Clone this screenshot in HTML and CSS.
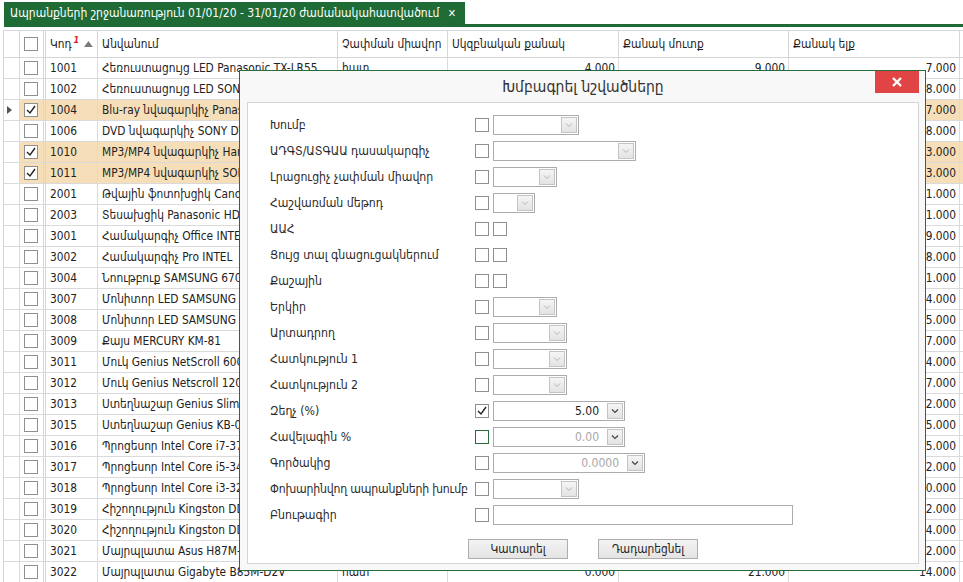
FILE: index.html
```html
<!DOCTYPE html>
<html lang="hy">
<head>
<meta charset="utf-8">
<title>Ապրանքների շրջանառություն</title>
<link rel="stylesheet" href="styles.css">
</head>
<body>
<div class="tabs">
  <div class="strip">
    <div class="tab"><span class="tab-text">Ապրանքների շրջանառություն 01/01/20 - 31/01/20 ժամանակահատվածում</span><span class="tab-x">✕</span></div>
  </div>
</div>

<div class="grid">
  <div class="row head">
    <div class="c ind"></div>
    <div class="c chk"><span class="cb"></span></div>
    <div class="c code">Կոդ<sup class="sortno">1</sup><svg class="sort" width="9" height="6" viewBox="0 0 9 6"><polygon points="0,6 9,6 4.5,0" fill="#7a7a7a"/></svg></div>
    <div class="c name">Անվանում</div>
    <div class="c unit">Չափման միավոր</div>
    <div class="c qs">Սկզբնական քանակ</div>
    <div class="c qi">Քանակ մուտք</div>
    <div class="c qo">Քանակ ելք</div>
    <div class="c fill"></div>
  </div>

  <div class="row"><div class="c ind"></div><div class="c chk"><span class="cb"></span></div><div class="c code">1001</div><div class="c name">Հեռուստացույց LED Panasonic TX-LR55</div><div class="c unit">հատ</div><div class="c num qs">4.000</div><div class="c num qi">9.000</div><div class="c num qo">7.000</div><div class="c fill"></div></div>
  <div class="row"><div class="c ind"></div><div class="c chk"><span class="cb"></span></div><div class="c code">1002</div><div class="c name">Հեռուստացույց LED SONY KDL-40</div><div class="c unit">հատ</div><div class="c num qs">2.000</div><div class="c num qi">10.000</div><div class="c num qo">8.000</div><div class="c fill"></div></div>
  <div class="row sel"><div class="c ind"><svg class="cur" width="5" height="8" viewBox="0 0 5 8"><polygon points="0,0 5,4 0,8" fill="#555"/></svg></div><div class="c chk"><span class="cb on"><svg width="12" height="12" viewBox="0 0 12 12"><polyline points="2,6 5,9 10,2" fill="none" stroke="#222" stroke-width="1.4"/></svg></span></div><div class="c code">1004</div><div class="c name">Blu-ray նվագարկիչ Panasonic DMP</div><div class="c unit">հատ</div><div class="c num qs">3.000</div><div class="c num qi">6.000</div><div class="c num qo">7.000</div><div class="c fill"></div></div>
  <div class="row"><div class="c ind"></div><div class="c chk"><span class="cb"></span></div><div class="c code">1006</div><div class="c name">DVD նվագարկիչ SONY DVP-SR</div><div class="c unit">հատ</div><div class="c num qs">1.000</div><div class="c num qi">8.000</div><div class="c num qo">8.000</div><div class="c fill"></div></div>
  <div class="row sel"><div class="c ind"></div><div class="c chk"><span class="cb on"><svg width="12" height="12" viewBox="0 0 12 12"><polyline points="2,6 5,9 10,2" fill="none" stroke="#222" stroke-width="1.4"/></svg></span></div><div class="c code">1010</div><div class="c name">MP3/MP4 նվագարկիչ Hama</div><div class="c unit">հատ</div><div class="c num qs">2.000</div><div class="c num qi">4.000</div><div class="c num qo">3.000</div><div class="c fill"></div></div>
  <div class="row sel"><div class="c ind"></div><div class="c chk"><span class="cb on"><svg width="12" height="12" viewBox="0 0 12 12"><polyline points="2,6 5,9 10,2" fill="none" stroke="#222" stroke-width="1.4"/></svg></span></div><div class="c code">1011</div><div class="c name">MP3/MP4 նվագարկիչ SONY</div><div class="c unit">հատ</div><div class="c num qs">0.000</div><div class="c num qi">5.000</div><div class="c num qo">3.000</div><div class="c fill"></div></div>
  <div class="row"><div class="c ind"></div><div class="c chk"><span class="cb"></span></div><div class="c code">2001</div><div class="c name">Թվային ֆոտոխցիկ Canon</div><div class="c unit">հատ</div><div class="c num qs">1.000</div><div class="c num qi">2.000</div><div class="c num qo">1.000</div><div class="c fill"></div></div>
  <div class="row"><div class="c ind"></div><div class="c chk"><span class="cb"></span></div><div class="c code">2003</div><div class="c name">Տեսախցիկ Panasonic HDC</div><div class="c unit">հատ</div><div class="c num qs">0.000</div><div class="c num qi">3.000</div><div class="c num qo">1.000</div><div class="c fill"></div></div>
  <div class="row"><div class="c ind"></div><div class="c chk"><span class="cb"></span></div><div class="c code">3001</div><div class="c name">Համակարգիչ Office INTEL</div><div class="c unit">հատ</div><div class="c num qs">5.000</div><div class="c num qi">12.000</div><div class="c num qo">9.000</div><div class="c fill"></div></div>
  <div class="row"><div class="c ind"></div><div class="c chk"><span class="cb"></span></div><div class="c code">3002</div><div class="c name">Համակարգիչ Pro INTEL</div><div class="c unit">հատ</div><div class="c num qs">3.000</div><div class="c num qi">10.000</div><div class="c num qo">8.000</div><div class="c fill"></div></div>
  <div class="row"><div class="c ind"></div><div class="c chk"><span class="cb"></span></div><div class="c code">3004</div><div class="c name">Նոութբուք SAMSUNG 670Z</div><div class="c unit">հատ</div><div class="c num qs">1.000</div><div class="c num qi">2.000</div><div class="c num qo">1.000</div><div class="c fill"></div></div>
  <div class="row"><div class="c ind"></div><div class="c chk"><span class="cb"></span></div><div class="c code">3007</div><div class="c name">Մոնիտոր LED SAMSUNG S22</div><div class="c unit">հատ</div><div class="c num qs">2.000</div><div class="c num qi">6.000</div><div class="c num qo">4.000</div><div class="c fill"></div></div>
  <div class="row"><div class="c ind"></div><div class="c chk"><span class="cb"></span></div><div class="c code">3008</div><div class="c name">Մոնիտոր LED SAMSUNG S24</div><div class="c unit">հատ</div><div class="c num qs">1.000</div><div class="c num qi">7.000</div><div class="c num qo">5.000</div><div class="c fill"></div></div>
  <div class="row"><div class="c ind"></div><div class="c chk"><span class="cb"></span></div><div class="c code">3009</div><div class="c name">Քայս MERCURY KM-81</div><div class="c unit">հատ</div><div class="c num qs">2.000</div><div class="c num qi">8.000</div><div class="c num qo">7.000</div><div class="c fill"></div></div>
  <div class="row"><div class="c ind"></div><div class="c chk"><span class="cb"></span></div><div class="c code">3011</div><div class="c name">Մուկ Genius NetScroll 600</div><div class="c unit">հատ</div><div class="c num qs">3.000</div><div class="c num qi">5.000</div><div class="c num qo">4.000</div><div class="c fill"></div></div>
  <div class="row"><div class="c ind"></div><div class="c chk"><span class="cb"></span></div><div class="c code">3012</div><div class="c name">Մուկ Genius Netscroll 120</div><div class="c unit">հատ</div><div class="c num qs">4.000</div><div class="c num qi">9.000</div><div class="c num qo">7.000</div><div class="c fill"></div></div>
  <div class="row"><div class="c ind"></div><div class="c chk"><span class="cb"></span></div><div class="c code">3013</div><div class="c name">Ստեղնաշար Genius SlimStar</div><div class="c unit">հատ</div><div class="c num qs">1.000</div><div class="c num qi">3.000</div><div class="c num qo">2.000</div><div class="c fill"></div></div>
  <div class="row"><div class="c ind"></div><div class="c chk"><span class="cb"></span></div><div class="c code">3015</div><div class="c name">Ստեղնաշար Genius KB-06</div><div class="c unit">հատ</div><div class="c num qs">2.000</div><div class="c num qi">6.000</div><div class="c num qo">5.000</div><div class="c fill"></div></div>
  <div class="row"><div class="c ind"></div><div class="c chk"><span class="cb"></span></div><div class="c code">3016</div><div class="c name">Պրոցեսոր Intel Core i7-3770</div><div class="c unit">հատ</div><div class="c num qs">1.000</div><div class="c num qi">7.000</div><div class="c num qo">5.000</div><div class="c fill"></div></div>
  <div class="row"><div class="c ind"></div><div class="c chk"><span class="cb"></span></div><div class="c code">3017</div><div class="c name">Պրոցեսոր Intel Core i5-3470</div><div class="c unit">հատ</div><div class="c num qs">0.000</div><div class="c num qi">4.000</div><div class="c num qo">2.000</div><div class="c fill"></div></div>
  <div class="row"><div class="c ind"></div><div class="c chk"><span class="cb"></span></div><div class="c code">3018</div><div class="c name">Պրոցեսոր Intel Core i3-3220</div><div class="c unit">հատ</div><div class="c num qs">1.000</div><div class="c num qi">2.000</div><div class="c num qo">0.000</div><div class="c fill"></div></div>
  <div class="row"><div class="c ind"></div><div class="c chk"><span class="cb"></span></div><div class="c code">3019</div><div class="c name">Հիշողություն Kingston DDR3 4GB</div><div class="c unit">հատ</div><div class="c num qs">3.000</div><div class="c num qi">8.000</div><div class="c num qo">2.000</div><div class="c fill"></div></div>
  <div class="row"><div class="c ind"></div><div class="c chk"><span class="cb"></span></div><div class="c code">3020</div><div class="c name">Հիշողություն Kingston DDR3 8GB</div><div class="c unit">հատ</div><div class="c num qs">2.000</div><div class="c num qi">6.000</div><div class="c num qo">4.000</div><div class="c fill"></div></div>
  <div class="row"><div class="c ind"></div><div class="c chk"><span class="cb"></span></div><div class="c code">3021</div><div class="c name">Մայրպլատա Asus H87M-E</div><div class="c unit">հատ</div><div class="c num qs">1.000</div><div class="c num qi">5.000</div><div class="c num qo">2.000</div><div class="c fill"></div></div>
  <div class="row"><div class="c ind"></div><div class="c chk"><span class="cb"></span></div><div class="c code">3022</div><div class="c name">Մայրպլատա Gigabyte B85M-D2V</div><div class="c unit">հատ</div><div class="c num qs">0.000</div><div class="c num qi">21.000</div><div class="c num qo">14.000</div><div class="c fill"></div></div>
</div>

<div class="dialog">
  <div class="dlg-title">Խմբագրել նշվածները</div>
  <div class="dlg-close"><svg width="10" height="10" viewBox="0 0 10 10"><path d="M1,1 L9,9 M9,1 L1,9" stroke="#fff" stroke-width="2.4" fill="none"/></svg></div>
  <div class="panel">
    <div class="form">
      <div class="frow"><span class="lbl">Խումբ</span><span class="cb"></span><span class="combo w86"><span class="ddb"><svg width="14" height="14" viewBox="0 0 14 14"><polyline points="4,5.5 7,8.5 10,5.5" fill="none" stroke="#b4b4b4" stroke-width="1"/></svg></span></span></div>
      <div class="frow"><span class="lbl">ԱԴԳՏ/ԱՏԳԱԱ դասակարգիչ</span><span class="cb"></span><span class="combo w143"><span class="ddb"><svg width="14" height="14" viewBox="0 0 14 14"><polyline points="4,5.5 7,8.5 10,5.5" fill="none" stroke="#b4b4b4" stroke-width="1"/></svg></span></span></div>
      <div class="frow"><span class="lbl">Լրացուցիչ չափման միավոր</span><span class="cb"></span><span class="combo w64"><span class="ddb"><svg width="14" height="14" viewBox="0 0 14 14"><polyline points="4,5.5 7,8.5 10,5.5" fill="none" stroke="#b4b4b4" stroke-width="1"/></svg></span></span></div>
      <div class="frow"><span class="lbl">Հաշվառման մեթոդ</span><span class="cb"></span><span class="combo w42"><span class="ddb"><svg width="14" height="14" viewBox="0 0 14 14"><polyline points="4,5.5 7,8.5 10,5.5" fill="none" stroke="#b4b4b4" stroke-width="1"/></svg></span></span></div>
      <div class="frow"><span class="lbl">ԱԱՀ</span><span class="cb"></span><span class="cb"></span></div>
      <div class="frow"><span class="lbl">Ցույց տալ գնացուցակներում</span><span class="cb"></span><span class="cb"></span></div>
      <div class="frow"><span class="lbl">Քաշային</span><span class="cb"></span><span class="cb"></span></div>
      <div class="frow"><span class="lbl">Երկիր</span><span class="cb"></span><span class="combo w64"><span class="ddb"><svg width="14" height="14" viewBox="0 0 14 14"><polyline points="4,5.5 7,8.5 10,5.5" fill="none" stroke="#b4b4b4" stroke-width="1"/></svg></span></span></div>
      <div class="frow"><span class="lbl">Արտադրող</span><span class="cb"></span><span class="combo w74"><span class="ddb"><svg width="14" height="14" viewBox="0 0 14 14"><polyline points="4,5.5 7,8.5 10,5.5" fill="none" stroke="#b4b4b4" stroke-width="1"/></svg></span></span></div>
      <div class="frow"><span class="lbl">Հատկություն 1</span><span class="cb"></span><span class="combo w74"><span class="ddb"><svg width="14" height="14" viewBox="0 0 14 14"><polyline points="4,5.5 7,8.5 10,5.5" fill="none" stroke="#b4b4b4" stroke-width="1"/></svg></span></span></div>
      <div class="frow"><span class="lbl">Հատկություն 2</span><span class="cb"></span><span class="combo w74"><span class="ddb"><svg width="14" height="14" viewBox="0 0 14 14"><polyline points="4,5.5 7,8.5 10,5.5" fill="none" stroke="#b4b4b4" stroke-width="1"/></svg></span></span></div>
      <div class="frow"><span class="lbl">Զեղչ (%)</span><span class="cb on"><svg width="12" height="12" viewBox="0 0 12 12"><polyline points="2,6 5,9 10,2" fill="none" stroke="#222" stroke-width="1.4"/></svg></span><span class="combo w132"><span class="val">5.00</span><span class="ddb"><svg width="14" height="14" viewBox="0 0 14 14"><polyline points="4,5.5 7,8.5 10,5.5" fill="none" stroke="#444" stroke-width="1.2"/></svg></span></span></div>
      <div class="frow"><span class="lbl">Հավելագին %</span><span class="cb focus"></span><span class="combo w132"><span class="val dis">0.00</span><span class="ddb"><svg width="14" height="14" viewBox="0 0 14 14"><polyline points="4,5.5 7,8.5 10,5.5" fill="none" stroke="#444" stroke-width="1.2"/></svg></span></span></div>
      <div class="frow"><span class="lbl">Գործակից</span><span class="cb"></span><span class="combo w152"><span class="val dis">0.0000</span><span class="ddb"><svg width="14" height="14" viewBox="0 0 14 14"><polyline points="4,5.5 7,8.5 10,5.5" fill="none" stroke="#444" stroke-width="1.2"/></svg></span></span></div>
      <div class="frow"><span class="lbl tight">Փոխարինվող ապրանքների խումբ</span><span class="cb"></span><span class="combo w86"><span class="ddb"><svg width="14" height="14" viewBox="0 0 14 14"><polyline points="4,5.5 7,8.5 10,5.5" fill="none" stroke="#b4b4b4" stroke-width="1"/></svg></span></span></div>
      <div class="frow"><span class="lbl">Բնութագիր</span><span class="cb"></span><span class="text-input"></span></div>
    </div>
    <div class="buttons">
      <button class="btn">Կատարել</button>
      <button class="btn">Դադարեցնել</button>
    </div>
  </div>
</div>
</body>
</html>
```

FILE: styles.css
```css
* { box-sizing: border-box; }
html, body { margin: 0; padding: 0; }
body {
  width: 963px;
  height: 582px;
  overflow: hidden;
  position: relative;
  background: #fff;
  color: #222;
  font-family: "DejaVu Sans Condensed", "DejaVu Sans", sans-serif;
  font-stretch: condensed;
  font-size: 11.8px;
}

/* ---------- tab strip ---------- */
.tabs { padding: 2px 0 0 4px; }
.strip { display: flex; border-bottom: 3px solid #1f6b36; }
.tab {
  height: 22px;
  width: 461px;
  background: #1f6b36;
  color: #fff;
  display: flex;
  align-items: center;
  padding-left: 6px;
  font-size: 12px;
}
.tab-text { white-space: nowrap; }
.tab-x { margin-left: auto; margin-right: 9px; font-size: 11px; font-weight: bold; }

/* ---------- grid ---------- */
.grid {
  margin: 3px 0 0 3px;
  border-left: 1px solid #d6d6d6;
  width: 970px;
}
.row {
  display: flex;
  height: 21px;
  border-bottom: 1px solid #dadada;
}
.row.head {
  height: 28px;
  border-top: 1px solid #d6d6d6;
  border-bottom: 1px solid #d6d6d6;
}
.c {
  flex: none;
  height: 100%;
  border-right: 1px solid #dadada;
  display: flex;
  align-items: center;
  padding: 0 4px;
  white-space: nowrap;
  overflow: hidden;
}
.head .c { border-right-color: #d6d6d6; }
.ind { width: 16px; padding: 0 0 0 3px; }
.chk { width: 26px; border-right: 3px double #d6d6d6; padding: 0 0 0 4px; }
.head .chk { border-right: 3px double #d6d6d6; }
.code { width: 52px; }
.name { width: 240px; }
.unit { width: 110px; }
.qs { width: 171px; }
.qi { width: 170px; }
.qo { width: 171px; }
.fill { width: 20px; border-right: none; }
.num { justify-content: flex-end; padding-right: 3px; }
.row.sel .c:not(.ind) { background: #f6dfb8; }

.sortno {
  color: #e3221c;
  font-weight: bold;
  font-style: italic;
  font-size: 9px;
  align-self: flex-start;
  margin: 5px 0 0 2px;
  line-height: 1;
}
.sort { margin-left: 5px; }

/* checkbox */
.cb {
  flex: none;
  display: inline-flex;
  align-items: center;
  justify-content: center;
  width: 14px;
  height: 14px;
  border: 1px solid #8f8f8f;
  background: #fff;
}
.cb.focus { border-color: #2b6b3a; }

/* ---------- dialog ---------- */
.dialog {
  position: absolute;
  left: 239px;
  top: 70px;
  width: 687px;
  height: 501px;
  border: 1px solid #2a6b3a;
  background: #f8f8f8;
  display: flex;
  flex-direction: column;
  padding: 0 6px 6px 7px;
}
.dlg-title {
  height: 31px;
  display: flex;
  align-items: center;
  justify-content: center;
  font-size: 15.5px;
  color: #333;
  padding-top: 1px;
}
.dlg-close {
  position: absolute;
  top: 0;
  right: 6px;
  width: 44px;
  height: 22px;
  background: #e04444;
  display: flex;
  align-items: center;
  justify-content: center;
}
.panel {
  flex: 1;
  background: #fff;
  border: 1px solid #d4d4d4;
  display: flex;
  flex-direction: column;
  padding: 9px 0 0 22px;
}
.form { display: flex; flex-direction: column; }
.frow {
  height: 26px;
  display: flex;
  align-items: center;
  color: #2a2a2a;
  font-size: 12.2px;
}
.lbl { width: 205px; flex: none; white-space: nowrap; }
.lbl.tight { letter-spacing: -0.2px; }
.frow .cb { margin-right: 4px; }

.combo {
  flex: none;
  height: 20px;
  border: 1px solid #acacac;
  background: #fff;
  display: flex;
  align-items: center;
  justify-content: flex-end;
  padding-right: 1px;
}
.val { margin-right: 8px; font-size: 12px; color: #222; }
.val.dis { color: #a8a8a8; }
.ddb {
  width: 16px;
  height: 16px;
  border: 1px solid #c4c4c4;
  background: linear-gradient(#f5f5f5, #e3e3e3);
  display: flex;
  align-items: center;
  justify-content: center;
}
.w42 { width: 42px; }
.w64 { width: 64px; }
.w74 { width: 74px; }
.w86 { width: 86px; }
.w132 { width: 132px; }
.w143 { width: 143px; }
.w152 { width: 152px; }
.text-input {
  width: 300px;
  height: 20px;
  border: 1px solid #acacac;
  background: #fff;
}

.buttons {
  display: flex;
  justify-content: center;
  gap: 30px;
  margin-top: 11px;
  padding-right: 22px;
}
.btn {
  width: 100px;
  height: 20px;
  border: 1px solid #adadad;
  background: linear-gradient(#f3f3f3, #e4e4e4);
  font-family: inherit;
  font-size: 11.8px;
  color: #222;
  padding: 0;
}
```
